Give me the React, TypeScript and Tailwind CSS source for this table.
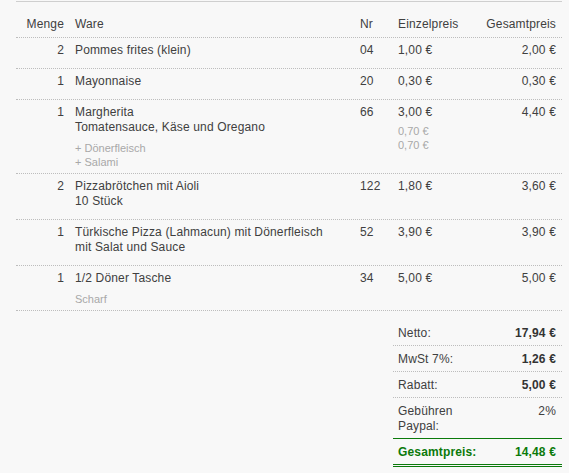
import React from "react";

type Item = {
  qty: string;
  name: string;
  desc?: string;
  extras?: string[];
  nr: string;
  price: string;
  extraPrices?: string[];
  total: string;
};

const items: Item[] = [
  { qty: "2", name: "Pommes frites (klein)", nr: "04", price: "1,00 €", total: "2,00 €" },
  { qty: "1", name: "Mayonnaise", nr: "20", price: "0,30 €", total: "0,30 €" },
  {
    qty: "1",
    name: "Margherita",
    desc: "Tomatensauce, Käse und Oregano",
    extras: ["+ Dönerfleisch", "+ Salami"],
    nr: "66",
    price: "3,00 €",
    extraPrices: ["0,70 €", "0,70 €"],
    total: "4,40 €",
  },
  { qty: "2", name: "Pizzabrötchen mit Aioli", desc: "10 Stück", nr: "122", price: "1,80 €", total: "3,60 €" },
  {
    qty: "1",
    name: "Türkische Pizza (Lahmacun) mit Dönerfleisch",
    desc: "mit Salat und Sauce",
    nr: "52",
    price: "3,90 €",
    total: "3,90 €",
  },
  { qty: "1", name: "1/2 Döner Tasche", extras: ["Scharf"], nr: "34", price: "5,00 €", total: "5,00 €" },
];

const rowGrid = "grid grid-cols-[54px_285px_38px_77px_92px]";

export default function App() {
  return (
    <div
      className="min-h-[473px] w-[569px] bg-[#f8f8f8] text-[12px] leading-[15px] tracking-[0.15px] text-[#404040]"
      style={{ fontFamily: '"Liberation Sans", Arial, sans-serif' }}
    >
      <div className="ml-[16px] w-[546px] pt-[1px]">
        <div className="border-t border-[#cfcfcf]">
          {/* header */}
          <div className={`${rowGrid} border-b border-dotted border-[#bdbdbd] pt-[15px] pb-[5px]`}>
            <div className="pr-[6px] text-right">Menge</div>
            <div className="pl-[5px]">Ware</div>
            <div className="pl-[5px]">Nr</div>
            <div className="pl-[5px]">Einzelpreis</div>
            <div className="pr-[6px] text-right">Gesamtpreis</div>
          </div>

          {items.map((it, i) => (
            <div
              key={i}
              className={`${rowGrid} border-b border-dotted border-[#bdbdbd] pt-[5px] pb-[4px]`}
            >
              <div className="pr-[6px] text-right">{it.qty}</div>
              <div className="pl-[5px]">
                <div className="mb-[6px]">
                  <div>{it.name}</div>
                  {it.desc && <div>{it.desc}</div>}
                </div>
                {it.extras && (
                  <div className="text-[11px] leading-[14px] tracking-normal text-[#a8a8a8]">
                    {it.extras.map((e, j) => (
                      <div key={j}>{e}</div>
                    ))}
                  </div>
                )}
              </div>
              <div className="pl-[5px]">{it.nr}</div>
              <div className="pl-[5px]">
                <div className="mb-[4px]">{it.price}</div>
                {it.extraPrices && (
                  <div className="text-[11px] leading-[14px] tracking-normal text-[#a8a8a8]">
                    {it.extraPrices.map((e, j) => (
                      <div key={j}>{e}</div>
                    ))}
                  </div>
                )}
              </div>
              <div className="pr-[6px] text-right">{it.total}</div>
            </div>
          ))}
        </div>

        {/* summary */}
        <div className="ml-[377px] mt-[9px] w-[169px]">
          <div className="grid grid-cols-[77px_92px] border-b border-dotted border-[#bdbdbd] pt-[6px] pb-[4px]">
            <div className="pl-[5px]">Netto:</div>
            <div className="pr-[6px] text-right font-bold text-[#333]">17,94 €</div>
          </div>
          <div className="grid grid-cols-[77px_92px] border-b border-dotted border-[#bdbdbd] pt-[6px] pb-[4px]">
            <div className="pl-[5px]">MwSt 7%:</div>
            <div className="pr-[6px] text-right font-bold text-[#333]">1,26 €</div>
          </div>
          <div className="grid grid-cols-[77px_92px] border-b border-dotted border-[#bdbdbd] pt-[6px] pb-[4px]">
            <div className="pl-[5px]">Rabatt:</div>
            <div className="pr-[6px] text-right font-bold text-[#333]">5,00 €</div>
          </div>
          <div className="grid grid-cols-[77px_92px] border-b border-[#0b7a0b] pt-[6px] pb-[4px]">
            <div className="pl-[5px]">Gebühren Paypal:</div>
            <div className="pr-[6px] text-right">2%</div>
          </div>
          <div className="grid grid-cols-[77px_92px] border-b-[3px] border-double border-[#0b7a0b] pt-[6px] pb-[4px] font-bold text-[#0b7a0b]">
            <div className="pl-[5px]">Gesamtpreis:</div>
            <div className="pr-[6px] text-right">14,48 €</div>
          </div>
        </div>
      </div>
    </div>
  );
}
